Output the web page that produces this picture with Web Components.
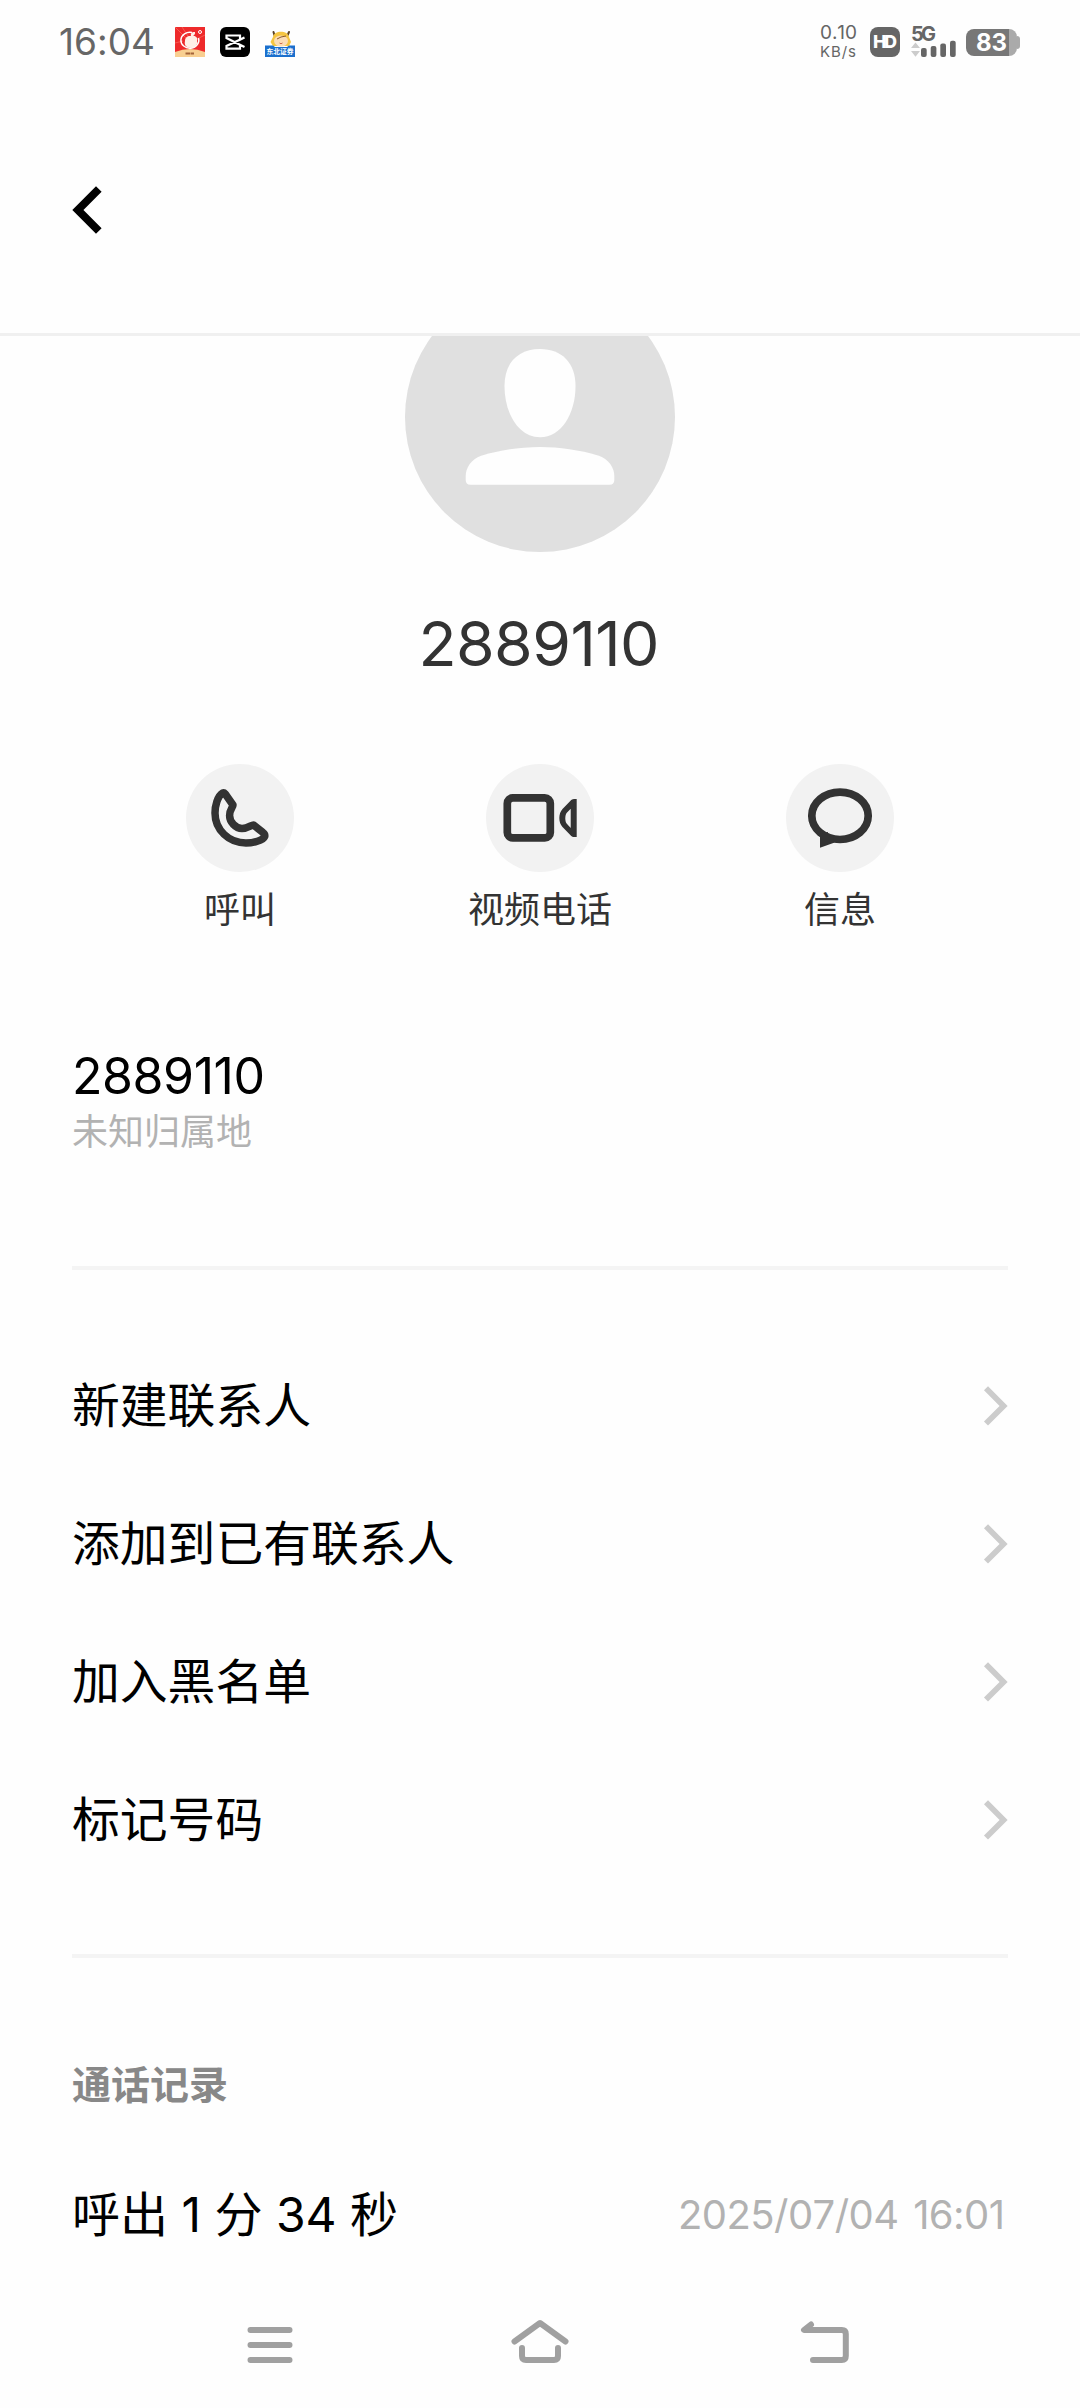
<!DOCTYPE html>
<html lang="zh-CN">
<head>
<meta charset="utf-8">
<title>2889110</title>
<style>
    body {
        margin: 0;
        background: #fefefe;
        font-family: Inter, "Noto Sans CJK SC", sans-serif;
        font-kerning: none;
    }
</style>
</head>
<body>
<contact-page>
    <status-bar slot="header"></status-bar>
    <title-bar slot="header"></title-bar>

    <contact-card><fit-text width="241">2889110</fit-text></contact-card>
    <action-row>
        <action-button icon="call">呼叫</action-button>
        <action-button icon="video">视频电话</action-button>
        <action-button icon="message">信息</action-button>
    </action-row>
    <number-row>
        <fit-text width="193">2889110</fit-text>
        <span slot="location">未知归属地</span>
    </number-row>
    <menu-list>
        <menu-item>新建联系人</menu-item>
        <menu-item>添加到已有联系人</menu-item>
        <menu-item>加入黑名单</menu-item>
        <menu-item>标记号码</menu-item>
    </menu-list>
    <call-log>
        <span slot="title">通话记录</span>
        <fit-text width="326">呼出 1 分 34 秒</fit-text>
        <fit-text slot="date" width="327">2025/07/04 16:01</fit-text>
    </call-log>

    <nav-bar slot="footer"></nav-bar>
</contact-page>

<script>
    const define = (name, html, base = HTMLElement) => {
        const template = document.createElement('template');
        template.innerHTML = html;

        window.customElements.define(name, class extends base {
            constructor() {
                super();
                this.attachShadow({mode: 'open'});
                this.shadowRoot.appendChild(template.content.cloneNode(true));
            }
        });
    };

    define('contact-page', `
        <style>
            :host {
                display: flex;
                flex-direction: column;
                width: 1080px;
                height: 2408px;
                overflow: hidden;
            }
            header {
                flex: none;
                box-sizing: border-box;
                height: 336px;
                border-bottom: 3px solid #f0f0f0;
            }
            main {
                flex: 1;
                min-height: 0;
                overflow: hidden;
            }
        </style>
        <header><slot name="header"></slot></header>
        <main><slot></slot></main>
        <slot name="footer"></slot>
    `);

    define('status-bar', `
        <style>
            :host {
                display: flex;
                align-items: center;
                box-sizing: border-box;
                height: 84px;
                padding: 0 60px 0 59px;
                color: #666;
            }
            svg { display: block; flex: none; }
            .time { width: 116px; font-size: 37px; line-height: 84px; }
            .apps { display: flex; gap: 15px; flex: 1; }
            .speed {
                display: flex;
                flex-direction: column;
                gap: 1px;
                width: 50px;
            }
            .speed fit-text:first-child { font-size: 19px; line-height: 18px; }
            .speed fit-text:last-child { font-size: 15px; line-height: 17px; }
            .hd {
                width: 30px;
                height: 30px;
                margin-right: 11px;
                border-radius: 8px;
                background: #666;
                color: #fff;
                font-size: 18px;
                font-weight: 800;
                line-height: 30px;
            }
            .hd fit-text { margin-left: 3px; }
            .signal { width: 55px; }
            .net { font-size: 20px; font-weight: 700; line-height: 15px; height: 15px; }
            .signal svg { margin-top: -2px; }
            .battery { display: flex; align-items: center; }
            .level {
                box-sizing: border-box;
                width: 51px;
                height: 27px;
                padding-left: 10px;
                border-radius: 8px;
                background: linear-gradient(90deg, #777 43px, #aaa 43px);
                color: #fff;
                font-size: 24px;
                font-weight: 700;
                line-height: 28px;
            }
            .tip { width: 3px; height: 13px; border-radius: 0 3px 3px 0; background: #aaa; }
        </style>
        <div class="time"><fit-text width="96">16:04</fit-text></div>
        <div class="apps">
            <svg width="30" height="30" viewBox="0 0 30 30">
                <rect width="30" height="30" fill="#ee2a2b"/>
                <path d="M0 0L12 12M7 0L13 9M30 8L20 13M0 16L8 14" stroke="#f65a50" stroke-width="1"/>
                <path d="M0 25Q15 19 30 25V30H0Z" fill="#f8cf91"/>
                <path d="M17 5.500A9 8 0 1 0 23.500 11" fill="none" stroke="#fff" stroke-width="1.400"/>
                <path d="M16 9C15 6 18 4.500 20 5C20.500 7 19 8.500 18 9C21 8.500 23 11 22 14C23 18 20 21 16 21C11 21 9 18 10 14C10 10 13 8.500 16 9Z" fill="#fff0e6"/>
                <circle cx="25" cy="5" r="1.500" fill="none" stroke="#fff"/>
                <path d="M10.500 26.500H13M14 25.500V27.500M15.500 26.500H19" stroke="#a4643a" stroke-width="2"/>
            </svg>
            <svg width="30" height="30" viewBox="0 0 30 30">
                <rect width="30" height="30" rx="6" fill="#000"/>
                <path d="M24.500 10.500L20 12.700V8.500H6.500V11L24.500 20M24.500 10.500L6.500 19V21.700H20V17.500" fill="none" stroke="#fff" stroke-width="2.200"/>
            </svg>
            <svg width="30" height="30" viewBox="0 0 30 30">
                <path d="M8.500 5L9.500 8.500M24 5L22.500 8.500" stroke="#594126" stroke-width="2" stroke-linecap="round"/>
                <path d="M8 10C9 3 23 3 24 10L26 15L24 19H8L5.500 15Z" fill="#f5c542"/>
                <ellipse cx="16" cy="14" rx="7" ry="5.500" fill="#fbdcb4"/>
                <path d="M12 12L16 10L21 9" fill="none" stroke="#8a5a2c"/>
                <path d="M14.500 16Q16 17.500 17.500 16" fill="none" stroke="#ce6b4d"/>
                <path d="M0 18.500H8L10 20H22L24 18.500H30V30H0Z" fill="#1b6fcd"/>
                <text x="15" y="27.300" fill="#fff" font-size="6.800" font-weight="700" text-anchor="middle">东北证券</text>
            </svg>
        </div>
        <div class="speed">
            <fit-text width="37">0.10</fit-text>
            <fit-text width="36">KB/s</fit-text>
        </div>
        <div class="hd"><fit-text width="24">HD</fit-text></div>
        <div class="signal">
            <div class="net"><fit-text width="25">5G</fit-text></div>
            <svg width="46" height="17" viewBox="0 0 46 17">
                <path d="M0 8L4.500 2.500L9 8ZM0 11H9L4.500 16.700Z" fill="#ccc"/>
                <rect x="10" y="8" width="5.700" height="9" rx="2" fill="#666"/>
                <rect x="19.700" y="6" width="5.700" height="11" rx="2" fill="#666"/>
                <rect x="29.300" y="3.500" width="5.700" height="13.500" rx="2" fill="#666"/>
                <rect x="39" y="0.700" width="5.700" height="16.300" rx="2" fill="#666"/>
            </svg>
        </div>
        <div class="battery">
            <div class="level"><fit-text width="31">83</fit-text></div>
            <div class="tip"></div>
        </div>
    `);

    define('title-bar', `
        <style>
            :host {
                display: flex;
                align-items: center;
                height: 252px;
                padding-left: 72px;
            }
        </style>
        <svg width="32" height="50" viewBox="0 0 32 50">
            <path d="M26.800 4L5.900 25L26.800 46" fill="none" stroke="#000" stroke-width="7.900"/>
        </svg>
    `);

    define('contact-card', `
        <style>
            :host {
                display: flex;
                flex-direction: column;
                align-items: center;
                height: 428px;
            }
            /* the list is scrolled a little, so the photo starts above the fold */
            svg { display: block; flex: none; margin-top: -54px; }
            .name {
                margin-top: 51px;
                padding-right: 2px;
                color: #333;
                font-size: 62.5px;
                line-height: 80px;
            }
        </style>
        <svg width="270" height="270" viewBox="0 0 270 270">
            <circle cx="135" cy="135" r="135" fill="#e0e0e0"/>
            <path d="M135 67C157 67 170.500 81 170.500 104C170.500 132 156 155.300 135 155.300C114 155.300 99.500 132 99.500 104C99.500 81 113 67 135 67Z" fill="#fefefe"/>
            <path d="M135 165C154 165 175 168 193 173.500C204 177 209.300 186 209.300 194V198Q209.300 202.700 204.500 202.700H65.500Q60.700 202.700 60.700 198V194C60.700 186 66 177 77 173.500C95 168 116 165 135 165Z" fill="#fefefe"/>
        </svg>
        <div class="name"><slot></slot></div>
    `);

    define('action-row', `
        <style>
            :host {
                display: grid;
                grid-template-columns: repeat(3, 300px);
                justify-content: center;
                height: 282px;
            }
        </style>
        <slot></slot>
    `);

    const ACTION_ICONS = {
        call: `<path d="M36.700 29C31.500 32 29 42 29 49C29 66 43 79 60 79C67 79 77 76.500 78.700 72.500C79 71 78.500 69.500 77 68.500L67.500 61C65 61 62 64.500 56 64.500C49.500 64.500 43.600 58 43.600 51.500C43.600 45.500 47 43.500 47 41L39.300 30Q38 28.500 36.700 29Z"
                fill="none" stroke="#333" stroke-width="7.500" stroke-linejoin="round"/>`,
        video: `<rect x="21.300" y="33.900" width="43" height="40" rx="5.500" fill="none" stroke="#333" stroke-width="7.700"/>
                <path d="M90.700 35H88C86.500 35 85.500 35.700 84.500 36.800L76.500 45C72.300 49.500 72.300 58.500 76.500 63L84.500 71.200C85.500 72.200 86.500 73 88 73H90.700ZM84.700 44.700V64L80.600 59.500C78.900 57 78.900 51.500 80.600 49Z" fill="#333" fill-rule="evenodd"/>`,
        message: `<ellipse cx="54" cy="51.800" rx="28.200" ry="23.700" fill="none" stroke="#333" stroke-width="7.700"/>
                <path d="M34 70V83.700L48 78.800L47 71L42 73.300V68Z" fill="#333"/>`
    };

    window.customElements.define('action-button', class extends HTMLElement {
        constructor() {
            super();
            this.attachShadow({mode: 'open'});
        }

        connectedCallback() {
            this.shadowRoot.innerHTML = `
                <style>
                    :host {
                        display: flex;
                        flex-direction: column;
                        align-items: center;
                        gap: 12px;
                        color: #333;
                        font-size: 36px;
                        line-height: 52px;
                    }
                    svg { flex: none; border-radius: 50%; background: #f2f2f2; }
                </style>
                <svg width="108" height="108" viewBox="0 0 108 108">${ACTION_ICONS[this.getAttribute('icon')]}</svg>
                <slot></slot>
            `;
        }
    });

    define('number-row', `
        <style>
            :host {
                display: flex;
                flex-direction: column;
                box-sizing: border-box;
                height: 224px;
                margin: 0 72px;
                border-bottom: 4px solid #f4f4f4;
                color: #000;
            }
            .number { font-size: 50px; line-height: 60px; }
            .location { color: #b2b2b2; font-size: 36px; line-height: 53px; }
        </style>
        <div class="number"><slot></slot></div>
        <div class="location"><slot name="location"></slot></div>
    `);

    define('menu-list', `
        <style>
            :host {
                display: flex;
                flex-direction: column;
                margin: 0 72px;
                padding: 67px 0 65px;
                border-bottom: 4px solid #f4f4f4;
            }
        </style>
        <slot></slot>
    `);

    define('menu-item', `
        <style>
            :host {
                display: flex;
                align-items: center;
                justify-content: space-between;
                height: 138px;
                color: #000;
                font-size: 47.8px;
                line-height: 70px;
            }
        </style>
        <slot></slot>
        <svg width="26" height="42" viewBox="0 0 26 42">
            <path d="M4 3.300L21.600 20.900L4 38.500" fill="none" stroke="#ccc" stroke-width="5.700"/>
        </svg>
    `);

    define('call-log', `
        <style>
            :host {
                display: block;
                margin: 0 72px;
                padding-top: 97px;
            }
            .title {
                color: #888;
                font-size: 39px;
                font-weight: 700;
                line-height: 60px;
            }
            .record {
                display: flex;
                align-items: center;
                justify-content: space-between;
                margin-top: 64px;
                color: #000;
                font-size: 48px;
                line-height: 72px;
            }
            .date {
                padding-right: 3px;
                color: #b2b2b2;
                font-size: 40px;
                word-spacing: 4px;
            }
        </style>
        <div class="title"><slot name="title"></slot></div>
        <div class="record">
            <slot></slot>
            <div class="date"><slot name="date"></slot></div>
        </div>
    `);

    define('nav-bar', `
        <style>
            :host {
                display: grid;
                flex: none;
                grid-template-columns: 270px 285px 60px;
                align-items: center;
                height: 128px;
                padding-left: 240px;
            }
            svg {
                fill: none;
                stroke: #a0a0a0;
                stroke-width: 6;
                stroke-linecap: round;
                stroke-linejoin: round;
            }
        </style>
        <svg width="60" height="60" viewBox="0 0 60 60">
            <path d="M10.500 16H49.500M10.500 31H49.500M10.500 46H49.500"/>
        </svg>
        <svg width="60" height="60" viewBox="0 0 60 60">
            <path d="M4.500 27.500L30 9L55.500 27.500M12 34V42Q12 46 16 46H44Q48 46 48 42V34"/>
        </svg>
        <svg width="60" height="60" viewBox="0 0 60 60">
            <path d="M16 10.500L9 16H46.800Q50.800 16 50.800 20V42Q50.800 46 46.800 46H18"/>
        </svg>
    `);

    // spreads its letters over the given width
    window.customElements.define('fit-text', class extends HTMLElement {
        constructor() {
            super();
            this.attachShadow({mode: 'open'});
            this.shadowRoot.innerHTML = `
                <style>
                    :host { display: block; white-space: nowrap; }
                    span { display: inline-block; }
                </style>
                <span><slot></slot></span>
            `;
        }

        get width() {
            return parseFloat(this.getAttribute('width')) || 0;
        }

        connectedCallback() {
            const span = this.shadowRoot.querySelector('span');
            const natural = span.getBoundingClientRect().width;
            const spacing = (this.width - natural) / (this.textContent.length - 1);
            span.style.letterSpacing = `${spacing}px`;
            span.style.marginRight = `${-spacing}px`;
        }
    });
</script>
</body>
</html>
